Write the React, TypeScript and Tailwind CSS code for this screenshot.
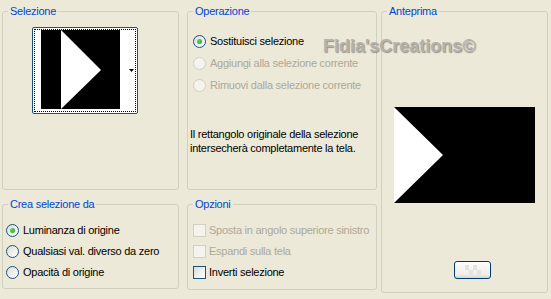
import React from "react";

const font = "font-['Liberation_Sans',Arial,sans-serif]";

function Radio({ checked, disabled }: { checked?: boolean; disabled?: boolean }) {
  return (
    <div
      className={
        "w-[13px] h-[13px] rounded-full border flex items-center justify-center shrink-0 " +
        (disabled
          ? "border-[#D2CFC3] bg-[#F4F3EE]"
          : "border-[#1C5180] bg-[linear-gradient(135deg,#DCDCD7,#FFFFFF)]")
      }
    >
      {checked && (
        <div className="w-[5px] h-[5px] rounded-full bg-[radial-gradient(circle_at_35%_35%,#5FD85F,#1E9E1E)]" />
      )}
    </div>
  );
}

function Check({ disabled }: { disabled?: boolean }) {
  return (
    <div
      className={
        "w-[13px] h-[13px] border shrink-0 " +
        (disabled
          ? "border-[#D2CFC3] bg-[#F4F3EE]"
          : "border-[#1C5180] bg-[linear-gradient(135deg,#DCDCD7,#FFFFFF)]")
      }
    />
  );
}

function Legend({ children }: { children: React.ReactNode }) {
  return (
    <legend className="ml-[5px] px-[2px] text-[11px] leading-[13px] tracking-[-0.25px] text-[#0046D5]">
      {children}
    </legend>
  );
}

export default function App() {
  return (
    <div
      className={
        "relative w-[551px] h-[299px] bg-[#ECE9D8] flex pl-[2px] pt-[5px] overflow-hidden text-[11px] tracking-[-0.25px] text-black " +
        font
      }
    >
      {/* Left column */}
      <div className="flex flex-col gap-[8px] w-[177px]">
        <fieldset className="w-[177px] h-[185px] border border-[#D0D0BF] rounded-[3px] p-0 m-0">
          <Legend>Selezione</Legend>
          <div className="ml-[29px] mt-[9px] w-[106px] h-[87px] border border-[#1C5180] rounded-[2px] bg-white p-[1px]">
            <div className="w-full h-full border border-dotted border-black flex">
              <div className="ml-[6px] w-[79px] h-[79px] bg-black">
                <svg width="79" height="79" viewBox="0 0 79 79">
                  <polygon points="20,0 60,40 20,79" fill="#fff" />
                </svg>
              </div>
              <div className="flex-1 flex items-center justify-end pr-[1px]">
                <svg width="5" height="3" viewBox="0 0 5 3">
                  <polygon points="0,0 5,0 2.5,3" fill="#000" />
                </svg>
              </div>
            </div>
          </div>
        </fieldset>

        <fieldset className="w-[177px] h-[91px] border border-[#D0D0BF] rounded-[3px] p-0 m-0">
          <Legend>Crea selezione da</Legend>
          <div className="mt-[9px] flex flex-col">
            <div className="h-[21px] flex items-center gap-[4px] ml-[3px]">
              <Radio checked />
              <span>Luminanza di origine</span>
            </div>
            <div className="h-[21px] flex items-center gap-[4px] ml-[3px]">
              <Radio />
              <span>Qualsiasi val. diverso da zero</span>
            </div>
            <div className="h-[21px] flex items-center gap-[4px] ml-[3px]">
              <Radio />
              <span>Opacità di origine</span>
            </div>
          </div>
        </fieldset>
      </div>

      {/* Middle column */}
      <div className="flex flex-col gap-[8px] w-[190px] ml-[8px]">
        <fieldset className="w-[190px] h-[185px] border border-[#D0D0BF] rounded-[3px] p-0 m-0">
          <Legend>Operazione</Legend>
          <div className="mt-[12px] flex flex-col">
            <div className="h-[22px] flex items-center gap-[4px] ml-[5px]">
              <Radio checked />
              <span>Sostituisci selezione</span>
            </div>
            <div className="h-[22px] flex items-center gap-[4px] ml-[5px] text-[#ACA899]">
              <Radio disabled />
              <span>Aggiungi alla selezione corrente</span>
            </div>
            <div className="h-[22px] flex items-center gap-[4px] ml-[5px] text-[#ACA899]">
              <Radio disabled />
              <span>Rimuovi dalla selezione corrente</span>
            </div>
          </div>
          <p className="mt-[31px] pl-[2px] leading-[14px]">
            Il rettangolo originale della selezione
            <br />
            intersecherà completamente la tela.
          </p>
        </fieldset>

        <fieldset className="w-[190px] h-[92px] border border-[#D0D0BF] rounded-[3px] p-0 m-0">
          <Legend>Opzioni</Legend>
          <div className="mt-[9px] flex flex-col">
            <div className="h-[21px] flex items-center gap-[3px] ml-[5px] text-[#ACA899]">
              <Check disabled />
              <span>Sposta in angolo superiore sinistro</span>
            </div>
            <div className="h-[21px] flex items-center gap-[3px] ml-[5px] text-[#ACA899]">
              <Check disabled />
              <span>Espandi sulla tela</span>
            </div>
            <div className="h-[21px] flex items-center gap-[3px] ml-[5px]">
              <Check />
              <span>Inverti selezione</span>
            </div>
          </div>
        </fieldset>
      </div>

      {/* Right column */}
      <div className="ml-[4px] w-[167px]">
        <fieldset className="w-[167px] h-[288px] border border-[#D0D0BF] rounded-[3px] p-0 m-0">
          <Legend>Anteprima</Legend>
          <div className="flex flex-col">
            <div className="ml-[12px] mt-[89px] w-[141px] h-[96px] bg-black">
              <svg width="141" height="96" viewBox="0 0 141 96">
                <polygon points="0,0 49,48 0,96" fill="#fff" />
              </svg>
            </div>
            <div className="ml-[72px] mt-[58px] w-[37px] h-[18px] border border-[#003C74] rounded-[3px] bg-[linear-gradient(180deg,#FFFFFF,#EEEDE7_80%,#D8D5C8)] flex items-center justify-center">
              <svg width="16" height="10" viewBox="0 0 16 10">
                <rect x="0" y="0" width="4" height="5" fill="#E4E3DD" />
                <rect x="8" y="0" width="4" height="5" fill="#E4E3DD" />
                <rect x="4" y="5" width="4" height="5" fill="#E4E3DD" />
                <rect x="12" y="5" width="4" height="5" fill="#E4E3DD" />
              </svg>
            </div>
          </div>
        </fieldset>
      </div>

      {/* Watermark */}
      <div className="absolute left-[323px] top-[35px] text-[18px] leading-[22px] font-bold tracking-[0px] text-[#B4B2AA] [text-shadow:1px_1px_1px_rgba(80,80,80,0.55)] pointer-events-none">
        Fidia'sCreations©
      </div>
    </div>
  );
}
